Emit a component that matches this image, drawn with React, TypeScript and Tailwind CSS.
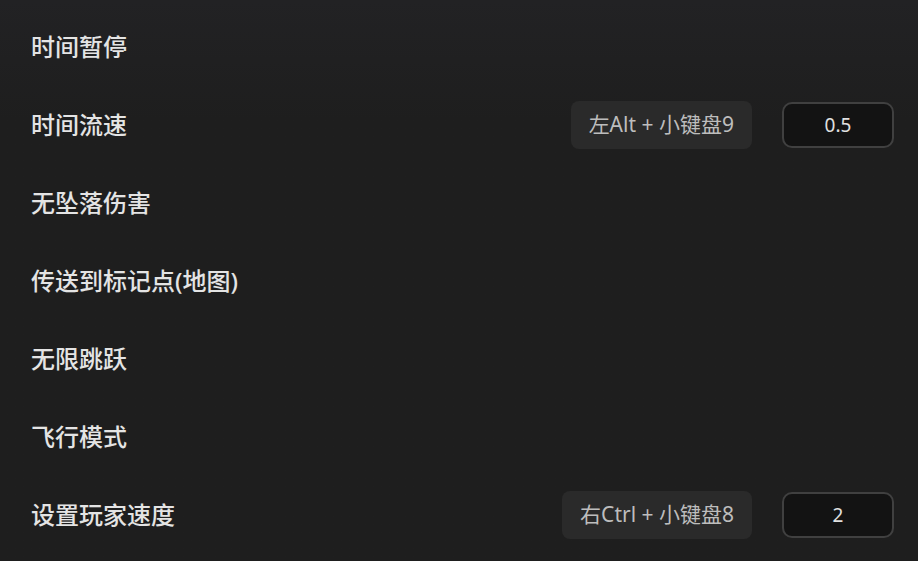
const ROWS: Array<{ label: string; hotkey?: string; value?: string }> = [
  { label: "时间暂停" },
  { label: "时间流速", hotkey: "左Alt + 小键盘9", value: "0.5" },
  { label: "无坠落伤害" },
  { label: "传送到标记点(地图)" },
  { label: "无限跳跃" },
  { label: "飞行模式" },
  { label: "设置玩家速度", hotkey: "右Ctrl + 小键盘8", value: "2" },
];

export default function App() {
  return (
    <div
      className="w-[918px] h-[561px] overflow-hidden bg-[#1e1e1e] bg-gradient-to-b from-[#222224] to-[#1e1e1e] to-[120px] pt-[8px]"
      style={{ fontFamily: '"Noto Sans", "Noto Sans CJK SC", sans-serif' }}
    >
      {ROWS.map((row) => (
        <div key={row.label} className="h-[78px] flex items-center justify-between pl-[31px] pr-[24px]">
          <span className="text-[24px] font-medium text-[#e4e4e4]">{row.label}</span>
          {row.hotkey && (
            <div className="flex items-center gap-[30px]">
              <div className="h-[48px] px-[18px] flex items-center rounded-[8px] bg-[#2a2a2a] text-[21px] text-[#bdbdbd]">
                {row.hotkey}
              </div>
              <div className="w-[112px] h-[46px] flex items-center justify-center rounded-[10px] border-2 border-[#404040] bg-[#131313] text-[19px] text-[#e0e0e0]">
                {row.value}
              </div>
            </div>
          )}
        </div>
      ))}
    </div>
  );
}
